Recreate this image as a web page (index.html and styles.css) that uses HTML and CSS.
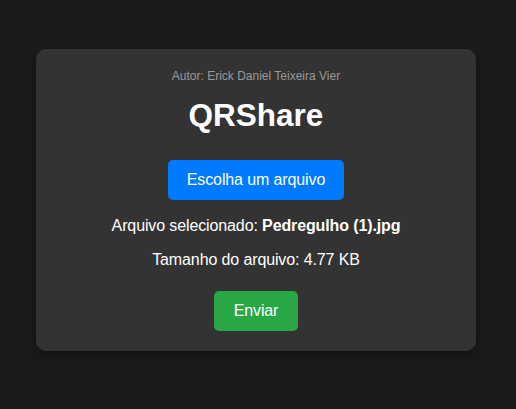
FILE: index.html
```html
<!DOCTYPE html>
<html lang="pt-BR">
<head>
<meta charset="utf-8">
<title>QRShare</title>
<link rel="stylesheet" href="styles.css">
</head>
<body>
<div class="card">
  <p class="author">Autor: Erick Daniel Teixeira Vier</p>
  <h1 class="title">QRShare</h1>
  <button class="btn btn-blue">Escolha um arquivo</button>
  <p class="info">Arquivo selecionado: <strong>Pedregulho (1).jpg</strong></p>
  <p class="info size">Tamanho do arquivo: 4.77 KB</p>
  <button class="btn btn-green">Enviar</button>
</div>
</body>
</html>
```

FILE: styles.css
```css
html, body {
  margin: 0;
  height: 100%;
}
body {
  background: #1b1b1b;
  font-family: "Liberation Sans", Arial, sans-serif;
  color: #fff;
  display: flex;
  justify-content: center;
  align-items: flex-start;
  padding-right: 4px;
  box-sizing: border-box;
}
.card {
  margin-top: 49px;
  width: 400px;
  padding: 20px;
  background: #333;
  border-radius: 10px;
  box-shadow: 0 4px 12px rgba(0, 0, 0, 0.4);
  display: flex;
  flex-direction: column;
  align-items: center;
  text-align: center;
}
.author {
  margin: 0;
  font-size: 12px;
  line-height: 14px;
  color: #999;
}
.title {
  margin: 14px 0 0;
  font-size: 31.5px;
  line-height: 37px;
  font-weight: bold;
}
.btn {
  border: none;
  border-radius: 5px;
  color: #fff;
  font-family: "Liberation Sans", Arial, sans-serif;
  font-size: 16px;
  line-height: 18px;
  letter-spacing: -0.12px;
  height: 40px;
  cursor: pointer;
}
.btn-blue {
  margin-top: 26px;
  width: 176px;
  padding: 0;
  background: #007bff;
}
.btn-green {
  margin-top: 22px;
  width: 84px;
  padding: 0;
  background: #28a745;
}
.info {
  margin: 17px 0 0;
  font-size: 16px;
  line-height: 18px;
  letter-spacing: -0.12px;
}
.size {
  margin-top: 16px;
}
```
